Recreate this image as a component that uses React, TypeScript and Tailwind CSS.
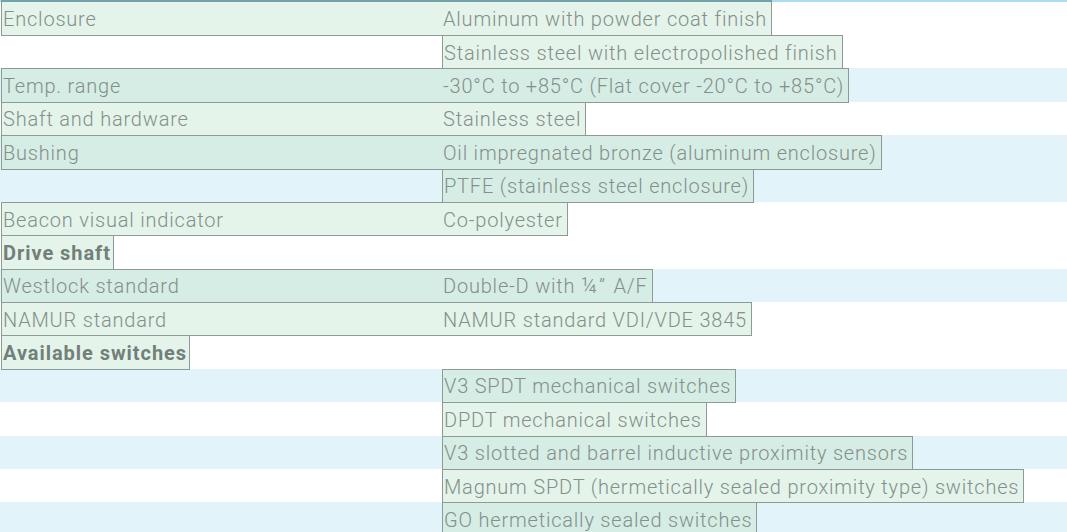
import React from "react";

type Row = { l?: string; v?: React.ReactNode; h?: string; blue: boolean };

const rows: Row[] = [
  { l: "Enclosure", v: "Aluminum with powder coat finish", blue: false },
  { l: "", v: "Stainless steel with electropolished finish", blue: false },
  { l: "Temp. range", v: "-30°C to +85°C (Flat cover -20°C to +85°C)", blue: true },
  { l: "Shaft and hardware", v: "Stainless steel", blue: false },
  { l: "Bushing", v: "Oil impregnated bronze (aluminum enclosure)", blue: true },
  { l: "", v: "PTFE (stainless steel enclosure)", blue: true },
  { l: "Beacon visual indicator", v: "Co-polyester", blue: false },
  { h: "Drive shaft", blue: false },
  {
    l: "Westlock standard",
    v: (
      <>
        Double-D with <span className="text-[22px] tracking-[2px]">¼</span>”{" "}
        <span className="ml-[2px]">A/F</span>
      </>
    ),
    blue: true,
  },
  { l: "NAMUR standard", v: "NAMUR standard VDI/VDE 3845", blue: false },
  { h: "Available switches", blue: false },
  { l: "", v: "V3 SPDT mechanical switches", blue: true },
  { l: "", v: "DPDT mechanical switches", blue: false },
  { l: "", v: "V3 slotted and barrel inductive proximity sensors", blue: true },
  { l: "", v: "Magnum SPDT (hermetically sealed proximity type) switches", blue: false },
  { l: "", v: "GO hermetically sealed switches", blue: true },
];

export default function App() {
  return (
    <div
      className="w-[1067px] h-[532px] overflow-hidden bg-white text-[20px] font-light tracking-[0.8px] text-[#858f8b] leading-none"
      style={{ fontFamily: "Roboto, 'Noto Sans', sans-serif" }}
    >
      <div className="h-[2px] bg-[#a9ddef]" />
      {rows.map((r, i) => {
        const cell = r.blue ? "bg-[#d5ede4]" : "bg-[#e4f4ea]";
        const first = i === 0;
        const rowH = first ? "h-[33px]" : "h-[33.375px]";
        const boxH = first
          ? "-mt-[2px] h-[36px] border-t-2 border-t-[#74a1a8]"
          : "h-[34.375px]";
        return (
          <div
            key={i}
            className={`flex items-start ${rowH} ${r.blue ? "bg-[#e2f3fa]" : "bg-white"}`}
          >
            {r.h ? (
              <div
                className={`relative ml-px ${boxH} flex items-center border border-[#8d9b95] ${cell} pl-[1px] pr-[2px] pt-[1px] font-bold tracking-[0.95px] text-[#737f7a]`}
              >
                {r.h}
              </div>
            ) : r.l ? (
              <div
                className={`relative ml-px ${boxH} flex items-center border border-[#8d9b95] ${cell} pt-[1px]`}
              >
                <div className="w-[441px] pl-[1px]">{r.l}</div>
                <div className="pr-[4px]">{r.v}</div>
              </div>
            ) : (
              <>
                <div className="w-[442px] shrink-0" />
                <div
                  className={`relative ${boxH} flex items-center border border-[#8d9b95] ${cell} pl-[1px] pr-[4px] pt-[1px]`}
                >
                  {r.v}
                </div>
              </>
            )}
          </div>
        );
      })}
    </div>
  );
}
